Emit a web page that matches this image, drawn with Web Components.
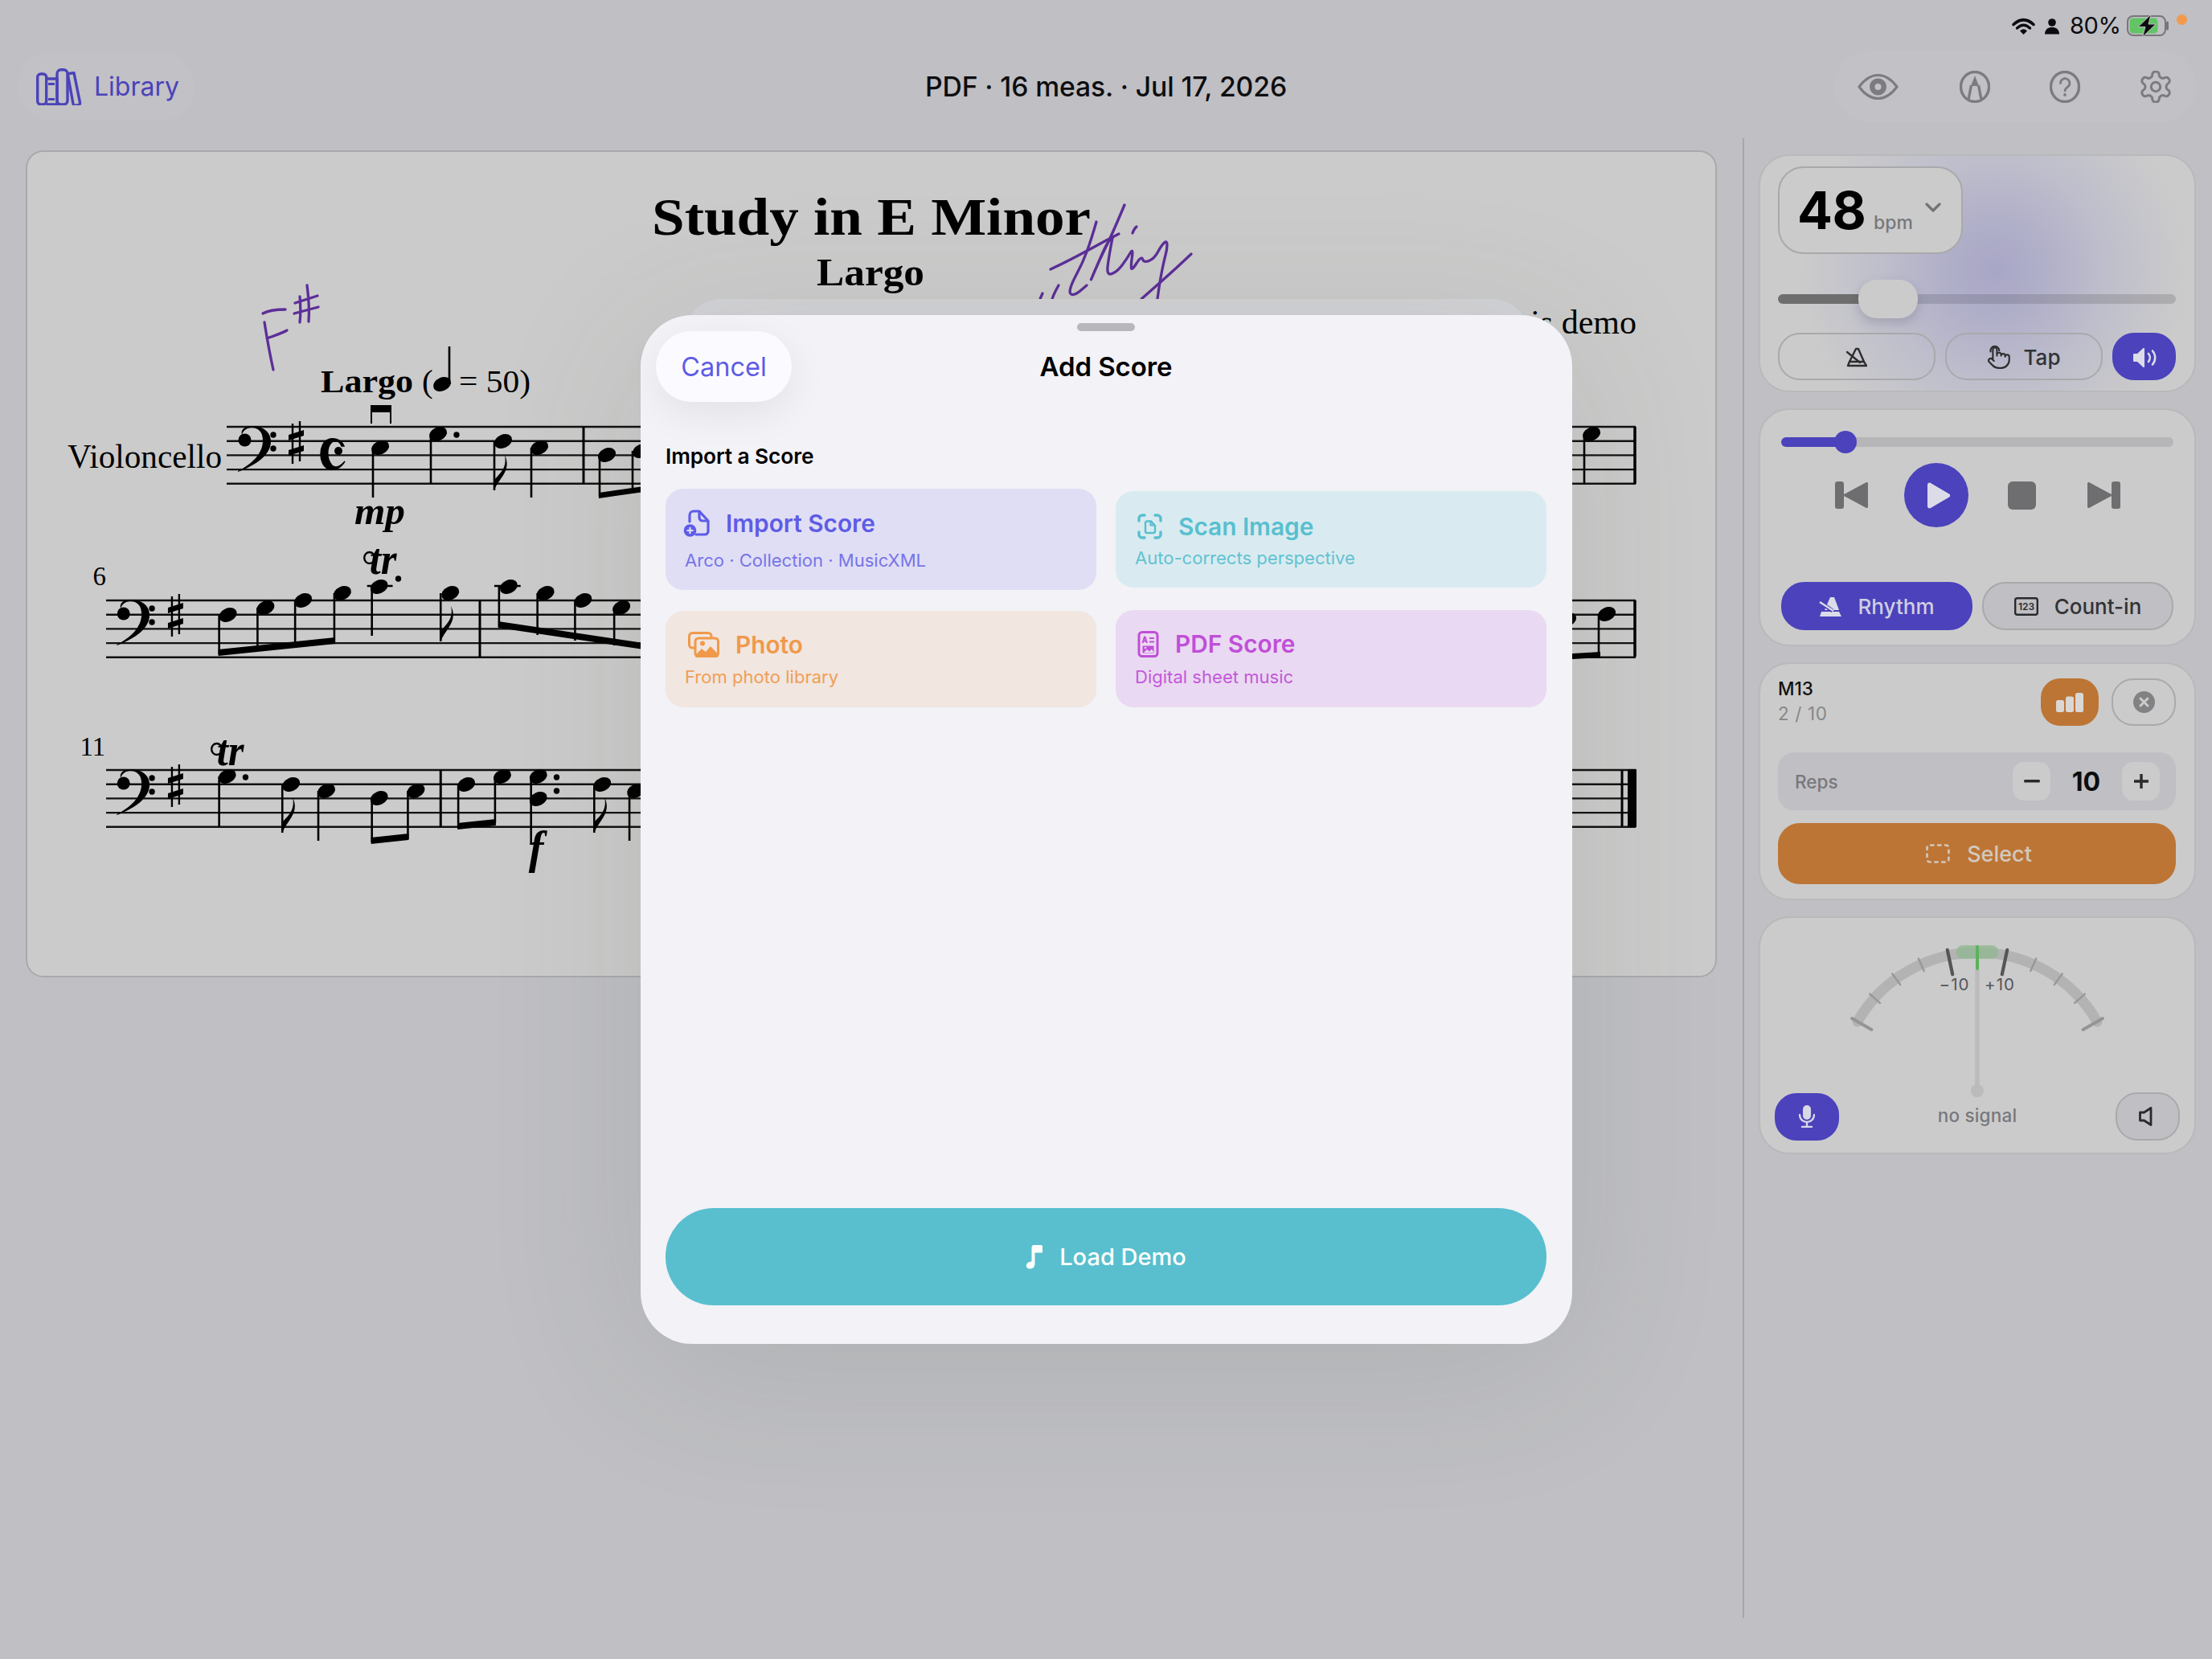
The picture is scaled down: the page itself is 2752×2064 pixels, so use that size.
<!DOCTYPE html>
<html lang="en"><head><meta charset="utf-8"><title>Add Score</title>
<style>
html,body{margin:0;padding:0;width:2752px;height:2064px;overflow:hidden;background:#bfbfc4;font-family:Inter,"Liberation Sans",sans-serif}
</style></head><body>
<app-root></app-root>
<script>
const define=(name,html)=>customElements.define(name,class extends HTMLElement{constructor(){super();this.attachShadow({mode:'open'}).innerHTML=html;}});

/* ---------- status bar ---------- */
define('status-bar',`<style>
:host{display:flex;height:63px;box-sizing:border-box;justify-content:flex-end;align-items:flex-start;padding:19px 31px 0 0;color:#0c0c0e;font:400 29px Inter,"Liberation Sans",sans-serif}
svg{display:block;overflow:visible}
.t{line-height:26px;height:26px;margin:0 11px 0 13px;width:60px;white-space:nowrap;letter-spacing:-.4px}
.dot{width:13px;height:13px;border-radius:50%;background:#f29a49;margin:-1px 0 0 8px}
</style>
<svg width="29" height="20" viewBox="2503 23 29 20" style="margin-top:4px"><path d="M2505 30.500Q2517.500 19 2530 30.500" fill="none" stroke="#0c0c0e" stroke-width="3.600" stroke-linecap="round"/><path d="M2509.500 35Q2517.500 27.500 2525.500 35" fill="none" stroke="#0c0c0e" stroke-width="3.400" stroke-linecap="round"/><path d="M2513 38.500Q2517.500 34 2522 38.500L2517.500 43Z" fill="#0c0c0e"/></svg>
<svg width="18" height="20" viewBox="0 0 18 20" style="margin:4px 0 0 12px"><circle cx="9" cy="5" r="4.800" fill="#0c0c0e"/><path d="M0 19.500C0 13.500 4 11 9 11S18 13.500 18 19.500Z" fill="#0c0c0e"/></svg>
<span class="t">80%</span>
<svg width="54" height="26" viewBox="0 0 54 26"><rect x="1" y="1" width="47" height="24" rx="7" fill="none" stroke="#77777a" stroke-width="2"/><rect x="3.500" y="3.500" width="35" height="19" rx="4.500" fill="#62c465"/><path d="M50.500 9v8" stroke="#77777a" stroke-width="3" stroke-linecap="round"/><path d="M30-1 14 14.500h9L19.500 27 36 11h-9Z" fill="#0c0c0e" stroke="#bfbfc4" stroke-width="1"/></svg>
<span class="dot"></span>`);

/* ---------- top bar ---------- */
define('top-bar',`<style>
:host{display:grid;grid-template-columns:1fr auto 1fr;align-items:center;height:89px;padding:0 20px 0 22px}
.lib{justify-self:start;display:flex;align-items:center;gap:13px;height:85px;padding:0 19px 0 23px;border-radius:42px;background:#c1c1c6;color:#4b43b9;font-size:32px}
.title{font-size:33.700px;font-weight:500;color:#0d0d0f;white-space:nowrap;letter-spacing:-.1px;margin-right:2px}
.tools{justify-self:end;display:flex;align-items:center;gap:74px;height:89px;box-sizing:border-box;padding:0 30px 0 29px;border-radius:44px;background:#c1c1c6}
svg{display:block;flex:none}
</style>
<div class="lib"><svg width="53" height="46" viewBox="45 85 59 46" style="width:59px"><g fill="none" stroke="#4b43b9" stroke-width="3.400" stroke-linejoin="round"><rect x="46.700" y="92" width="11" height="38" rx="4"/><path d="M57.700 98H71V130H57.700"/><rect x="71" y="86.700" width="13" height="43.300" rx="5"/><path d="M86 91.500l6-.9 7.500 37a2.500 2.500 0 0 1-2 3l-3.500.6a2.500 2.500 0 0 1-3-2L84.500 93.500z"/></g><path d="M60 104.500h8M60 123.500h8" stroke="#4b43b9" stroke-width="3"/></svg><span>Library</span></div>
<div class="title">PDF · 16 meas. · Jul 17, 2026</div>
<div class="tools">
<svg width="51" height="32" viewBox="0 0 51 32" style="margin-right:2px"><path d="M2 16C10 5 18 1.500 25.500 1.500S41 5 49 16C41 27 33 30.500 25.500 30.500S10 27 2 16Z" fill="none" stroke="#7b7b80" stroke-width="3"/><circle cx="25.500" cy="16" r="10.500" fill="#7b7b80"/><circle cx="25.500" cy="16" r="4" fill="#c2c2c7"/></svg>
<svg width="38" height="40" viewBox="0 0 38 40"><ellipse cx="19" cy="20" rx="17.500" ry="18.500" fill="none" stroke="#7b7b80" stroke-width="3.400"/><path d="M19 6 14 19h10Z" fill="#7b7b80"/><path d="M14.500 18 11 36M23.500 18 27 36" stroke="#7b7b80" stroke-width="3.400" fill="none"/></svg>
<svg width="38" height="40" viewBox="0 0 38 40"><ellipse cx="19" cy="20" rx="17.500" ry="18.500" fill="none" stroke="#7b7b80" stroke-width="3.400"/><path d="M13.500 15.500a5.700 5.700 0 1 1 9 4.600c-2 1.500-3.400 2.500-3.400 5" fill="none" stroke="#7b7b80" stroke-width="2.800" stroke-linecap="round"/><circle cx="19" cy="30" r="1.900" fill="#7b7b80"/></svg>
<svg width="40" height="40" viewBox="1.500 1.500 21 21"><path d="M12.220 2h-.44a2 2 0 0 0-2 2v.18a2 2 0 0 1-1 1.730l-.43.250a2 2 0 0 1-2 0l-.15-.08a2 2 0 0 0-2.730.73l-.22.380a2 2 0 0 0 .73 2.730l.15.100a2 2 0 0 1 1 1.720v.510a2 2 0 0 1-1 1.740l-.15.090a2 2 0 0 0-.73 2.730l.22.380a2 2 0 0 0 2.730.73l.15-.08a2 2 0 0 1 2 0l.43.250a2 2 0 0 1 1 1.730V20a2 2 0 0 0 2 2h.44a2 2 0 0 0 2-2v-.18a2 2 0 0 1 1-1.730l.43-.25a2 2 0 0 1 2 0l.15.08a2 2 0 0 0 2.730-.73l.22-.39a2 2 0 0 0-.73-2.730l-.15-.08a2 2 0 0 1-1-1.740v-.5a2 2 0 0 1 1-1.740l.15-.09a2 2 0 0 0 .73-2.730l-.22-.38a2 2 0 0 0-2.730-.73l-.15.08a2 2 0 0 1-2 0l-.43-.25a2 2 0 0 1-1-1.730V4a2 2 0 0 0-2-2z" fill="none" stroke="#7b7b80" stroke-width="1.600"/><circle cx="12" cy="12" r="3" fill="none" stroke="#7b7b80" stroke-width="1.600"/></svg>
</div>`);

/* ---------- score page ---------- */
const head=(x,y)=>`<ellipse cx="${x}" cy="${y}" rx="11.500" ry="8.300" transform="rotate(-24 ${x} ${y})"/>`;
const stem=(x,y1,y2)=>`<path d="M${x} ${y1}V${y2}" stroke="#000" stroke-width="2.600"/>`;
const note=(x,y,sx,ey)=>head(x,y)+stem(sx,y,ey);
const flag=(x,e)=>`<path d="M${x} ${e}C${x+6} ${e-16} ${x+22} ${e-24} ${x+13} ${e-44}C${x+16} ${e-28} ${x+8} ${e-22} ${x-1} ${e-12}Z"/>`;
const beam=(x1,y1,x2,y2,t=7)=>`<path d="M${x1-1} ${y1-t}L${x2+1} ${y2-t}V${y2}L${x1-1} ${y1}Z"/>`;
const dot=(x,y)=>`<circle cx="${x}" cy="${y}" r="3.700"/>`;
const staff=(t,x1,x2)=>[0,1,2,3,4].map(i=>`<path d="M${x1} ${t+i*17.700}H${x2}" stroke="#111" stroke-width="2.400"/>`).join('');
const bar=(x,t)=>`<path d="M${x} ${t}v71" stroke="#000" stroke-width="3"/>`;
const clef=(x,t)=>`<g transform="translate(${x} ${t})"><path d="M0 55C18 46 31 33 31 17C31 6 25 1 17 1C11 1 6 5 5 10C3 5 7-1 17-1C32-1 41 7 41 18C41 35 22 48 0 56Z"/><circle cx="8.500" cy="16.500" r="8"/>${dot(44,10)}${dot(44,27)}</g>`;
const sharp=(x,t)=>`<g transform="translate(${x} ${t-8})"><path d="M5 3V53M14 0V50" stroke="#000" stroke-width="2.400"/><path d="M0 17 19 11V18L0 24ZM0 36 19 30V37L0 43Z"/></g>`;
const trill=(x,y,s=54)=>`<text x="${x+8}" y="${y}" font-family="Liberation Serif" font-weight="700" font-style="italic" font-size="${s}" textLength="34" lengthAdjust="spacingAndGlyphs">tr</text><ellipse cx="${x+8}" cy="${y-20}" rx="6.500" ry="7" fill="none" stroke="#000" stroke-width="2.400"/>`;
const serif=`font-family="Liberation Serif"`;
const ink=(pts)=>{let d=`M${pts[0][0]} ${pts[0][1]}`;for(let i=1;i<pts.length-1;i++){const m=[(pts[i][0]+pts[i+1][0])/2,(pts[i][1]+pts[i+1][1])/2];d+=`Q${pts[i][0]} ${pts[i][1]} ${m[0]} ${m[1]}`;}const l=pts[pts.length-1];d+=`L${l[0]} ${l[1]}`;return `<path d="${d}"/>`;};
const music=`
${staff(531,282,2035)}${staff(747,132,2035)}${staff(958,132,2035)}
<path d="M2034 531v71M2034 747v70" stroke="#000" stroke-width="3.500"/>
<path d="M2018 958v70" stroke="#000" stroke-width="3"/><rect x="2025" y="957" width="11" height="72"/>
${clef(296,531)}
${sharp(359,532)}
<path d="M428 555C424 546 414 544 408 547C396 552 396 578 408 583C415 586 424 583 429 574C423 581 417 583 413 579C406 571 406 556 413 550C417 546 423 549 425 555Z" stroke="#000" stroke-width="1.500"/><circle cx="421" cy="561" r="5"/>
<g>
<rect x="461" y="504" width="26" height="9"/><path d="M462 504v23M486 504v23" stroke="#000" stroke-width="2"/>
${note(473,557,464,619)}${note(545,540,536,602)}${dot(568,541)}${note(626,549,615,610)}${flag(615,610)}${note(671,557,661,619)}
${bar(726,531)}
${note(755,566,746,618)}${note(798,561,787,613)}${beam(746,620,800,612)}
${note(1980,540,1971,602)}
${note(1950,771,1941,818)}${note(1999,764,1989,817)}${beam(1941,821,1990,818,7)}
</g>
<g transform="scale(.995 1)">
${clef(146,747)}${clef(146,958)}${sharp(210,747)}${sharp(210,959)}
${note(285,765,274,814)}${note(332,756,322,808)}${note(379,747,369,805)}${note(428,738,418,801)}${beam(274,816,418,801,8)}
${note(474,730,465,791)}<path d="M459 729H491" stroke="#000" stroke-width="2.400"/>${dot(498,720)}
${note(563,738,551,798)}${flag(551,798)}
${bar(600,747)}
${note(636,730,624,780)}<path d="M618 729H651" stroke="#000" stroke-width="2.400"/>${note(682,738,672,790)}${note(729,747,719,797)}${note(777,756,768,803)}${beam(624,781,804,808,8)}
${note(284,966,274,1028)}${dot(307,967)}
${note(364,976,353,1036)}${flag(353,1036)}
${note(408,984,398,1046)}
${note(474,993,465,1048)}${note(520,984,510,1044)}${beam(465,1050,510,1045,8)}
${bar(551,958)}
${note(583,976,573,1029)}${note(628,966,619,1024)}${beam(573,1032,619,1027,8)}
${note(673,966,664,1051)}${head(673,994)}${dot(696,967)}${dot(696,984)}
${note(753,976,743,1036)}${flag(743,1036)}
${note(795,984,787,1046)}
<text x="116" y="728" ${serif} font-size="33">6</text>
<text x="100" y="940" ${serif} font-size="33">11</text>
${trill(454,714)}${trill(263,952)}
<text x="661" y="1074" ${serif} font-weight="700" font-style="italic" font-size="56">f</text>
</g>
<text x="811" y="292" ${serif} font-weight="700" font-size="65" textLength="546" lengthAdjust="spacingAndGlyphs">Study in E Minor</text>
<text x="1016" y="355" ${serif} font-weight="700" font-size="48" textLength="134" lengthAdjust="spacingAndGlyphs">Largo</text>
<text x="2036" y="415" text-anchor="end" ${serif} font-size="42">is demo</text>
<text x="84" y="582" ${serif} font-size="43" textLength="192" lengthAdjust="spacingAndGlyphs">Violoncello</text>
<text x="399" y="488" ${serif} font-weight="700" font-size="41" textLength="115" lengthAdjust="spacingAndGlyphs">Largo</text>
<text x="525" y="488" ${serif} font-size="41">(</text>${head(550,478)}${stem(559,478,431)}
<text x="571" y="488" ${serif} font-size="41" textLength="89" lengthAdjust="spacingAndGlyphs">= 50)</text>
<text x="441" y="652" ${serif} font-weight="700" font-style="italic" font-size="48" textLength="63" lengthAdjust="spacingAndGlyphs">mp</text>
<g fill="none" stroke="#5c2e98" stroke-width="3.300" stroke-linecap="round" stroke-linejoin="round">
<path d="M327 390C334 386 344 385 355 385M329 401C332 420 336 442 340 460M332 421C340 418 350 415 357 411"/>
<path d="M373 369C374 380 374 392 373 401M382 355C384 370 385 386 384 400M366 390 396 382M367 377 395 368"/>
${ink([[1307,335],[1320,329],[1347,315],[1380,297],[1392,291]])}
${ink([[1364,276],[1358,297],[1347,327],[1333,353],[1330,366],[1338,367],[1352,355]])}
${ink([[1399,255],[1383,293],[1368,323],[1354,356],[1368,323],[1378,301],[1384,296]])}
${ink([[1384,296],[1379,322],[1377,343],[1390,338],[1402,322],[1410,308],[1407,330],[1408,337],[1420,318],[1423,327],[1436,322],[1445,305],[1452,299],[1452,310],[1448,325],[1443,350],[1440,372]])}
${ink([[1409,290],[1411,285],[1414,282]])}
${ink([[1420,372],[1445,350],[1465,332],[1482,316]])}
${ink([[1317,355],[1312,364],[1309,372]])}
${ink([[1297,365],[1294,372]])}
</g>`;
define('score-page',`<style>
:host{display:block;position:relative;width:2104px;height:1029px;box-sizing:border-box;background:#cbcbcb;border:2px solid #a9a9ad;border-radius:22px;overflow:hidden}
svg{position:absolute;left:-2px;top:-2px;width:2104px;height:1029px;display:block}
</style><svg viewBox="32 187 2104 1029" fill="#000">${music}</svg>`);

/* ---------- shared side panel card ---------- */
define('side-card',`<style>
:host{display:block;position:relative;box-sizing:border-box;width:544px;height:296px;background:#cbcbcb;border:2px solid #b9b9bb;border-radius:38px;overflow:hidden}
</style><slot></slot>`);

const btnCss=`.btn{display:flex;align-items:center;justify-content:center;box-sizing:border-box;border:2px solid #a9a9ac;border-radius:27px;color:#323234;font-size:26px;font-weight:500;white-space:nowrap}
.fill{background:#4b42bc;border-color:#4b42bc;color:#cfcfe2}
svg{display:block;flex:none}`;

define('tempo-card',`<style>
:host{display:block;height:100%;box-sizing:border-box;padding:13px 23px 0 22px;background:radial-gradient(circle 240px at 291px 143px,#a8a6c6 0,#b2b1c9 30%,#bfbfcc 60%,rgba(203,203,203,0) 100%)}
${btnCss}
.bpm{width:230px;height:109px;box-sizing:border-box;border:2px solid #a9a9ac;border-radius:32px;background:#cbcbcb;display:flex;align-items:baseline;padding:0 0 0 22px;line-height:105px}
.n{font-size:65px;font-weight:700;color:#000;letter-spacing:-.5px;width:95px}
.u{font-size:23px;font-weight:500;color:#78787c}
.bpm svg{align-self:center;margin:-8px 0 0 15px}
.sl{position:relative;height:48px;margin-top:32px;display:flex;align-items:center}
.tr{flex:1;height:12px;border-radius:6px;background:linear-gradient(90deg,#6e6e6e 0 101px,rgba(110,110,130,.35) 0 60%,rgba(150,150,150,.55) 100%)}
.th{position:absolute;left:100px;top:0;width:74px;height:48px;border-radius:23px;background:#cbcbcb;box-shadow:0 6px 14px rgba(60,60,90,.22)}
.row{display:grid;grid-template-columns:196px 196px 79px;gap:12px;margin-top:18px}
.row .btn{height:59px;gap:17px;padding-top:2px}
</style>
<div class="bpm"><span class="n">48</span><span class="u">bpm</span><svg width="20" height="12" viewBox="0 0 20 12"><path d="M2 2 10 10 18 2" fill="none" stroke="#737377" stroke-width="3.200" stroke-linecap="round" stroke-linejoin="round"/></svg></div>
<div class="sl"><div class="tr"></div><div class="th"></div></div>
<div class="row">
<div class="btn"><svg width="26" height="25" viewBox="0 0 26 25"><g fill="none" stroke="#2e2e30" stroke-width="2.400" stroke-linejoin="round" stroke-linecap="round"><path d="M2 23 4 18H22L25 23Z"/><path d="M4 18 12 2h3L22 18"/><path d="M1 6 17 19"/></g></svg></div>
<div class="btn"><svg width="28" height="31" viewBox="1 0 22 23"><g fill="none" stroke="#2e2e30" stroke-width="1.700" stroke-linecap="round" stroke-linejoin="round"><path d="M18 11v-1a2 2 0 0 0-2-2 2 2 0 0 0-2 2M14 10V9a2 2 0 0 0-2-2 2 2 0 0 0-2 2v1M10 9.500V4a2 2 0 0 0-2-2 2 2 0 0 0-2 2v10M18 11a2 2 0 1 1 4 0v3a8 8 0 0 1-8 8h-2c-2.800 0-4.500-.86-5.990-2.340l-3.600-3.600a2 2 0 0 1 2.830-2.820L7 15"/><path d="M3.800 6A4.300 4.300 0 0 1 8 .7 4.300 4.300 0 0 1 12.200 5"/></g></svg><span>Tap</span></div>
<div class="btn fill"><svg width="30" height="24" viewBox="0 0 30 24"><path d="M1 8a1 1 0 0 1 1-1h4l7-6.500a1 1 0 0 1 2 .8v21.400a1 1 0 0 1-2 .8L6 17H2a1 1 0 0 1-1-1Z" fill="#dcdce8"/><path d="M20 7a8 8 0 0 1 0 10M25 3.500a13 13 0 0 1 0 17" fill="none" stroke="#dcdce8" stroke-width="2.600" stroke-linecap="round"/></svg></div>
</div>`);

define('transport-card',`<style>
:host{display:block;height:100%;box-sizing:border-box;padding:26px 26px 0 26px}
${btnCss}
.sk{position:relative;height:28px;display:flex;align-items:center}
.sk i{flex:1;height:12px;border-radius:6px;background:linear-gradient(90deg,#4b42bc 0 80px,#b6b6b8 0)}
.sk b{position:absolute;left:66px;top:0;width:28px;height:28px;border-radius:50%;background:#4b42bc}
.ctl{display:grid;grid-template-columns:repeat(3,106px) 99px;justify-items:center;align-items:center;height:80px;margin-top:12px;padding-left:34px}
.play{width:80px;height:80px;border-radius:50%;background:#4b42bc;display:flex;align-items:center;justify-content:center}
.play svg{margin-left:6px}
.row{display:grid;grid-template-columns:238px 238px;gap:12px;margin-top:68px}
.row .btn{height:60px;gap:20px;border-radius:29px}
.g{background:#bfbfc4}
</style>
<div class="sk"><i></i><b></b></div>
<div class="ctl">
<svg width="41" height="34" viewBox="0 0 41 34"><rect width="11" height="34" rx="3" fill="#6e6e70"/><path d="M39 1 13 15a2 2 0 0 0 0 4L39 33a1.500 1.500 0 0 0 2-1.500V2.500A1.500 1.500 0 0 0 39 1Z" fill="#6e6e70"/></svg>
<div class="play"><svg width="30" height="33" viewBox="0 0 30 33"><path d="M1 3.500C1 1 3 0 5 1L28 14.500a2.300 2.300 0 0 1 0 4L5 32c-2 1-4 0-4-2.500Z" fill="#dcdce8"/></svg></div>
<svg width="35" height="35" viewBox="0 0 35 35"><rect width="35" height="35" rx="6" fill="#6e6e70"/></svg>
<svg width="41" height="34" viewBox="0 0 41 34"><rect x="30" width="11" height="34" rx="3" fill="#6e6e70"/><path d="M2 1 28 15a2 2 0 0 1 0 4L2 33a1.500 1.500 0 0 1-2-1.500V2.500A1.500 1.500 0 0 1 2 1Z" fill="#6e6e70"/></svg>
</div>
<div class="row">
<div class="btn fill"><svg width="28" height="25" viewBox="0 0 28 25"><path d="M1 25 3 19H25L28 25Z" fill="#dcdce8"/><path d="M7 17 14 1h5L25 17Z" fill="#dcdce8"/><path d="M1 7 17 18" stroke="#4b42bc" stroke-width="5"/><path d="M1 7 18 18" stroke="#dcdce8" stroke-width="2.400"/></svg><span>Rhythm</span></div>
<div class="btn g"><svg width="30" height="23" viewBox="0 0 30 23"><rect x="1.200" y="1.200" width="27.600" height="20.600" rx="2.500" fill="none" stroke="#2a2a2c" stroke-width="2.400"/><text x="15" y="16" text-anchor="middle" font-family="Inter" font-size="12" font-weight="600" fill="#2a2a2c">123</text></svg><span>Count-in</span></div>
</div>`);

define('loop-card',`<style>
:host{display:block;height:100%;box-sizing:border-box;padding:18px 23px 0 22px}
${btnCss}
.top{display:flex;align-items:center;height:59px}
.lbl{flex:1;font-size:22.500px;line-height:31px;margin-top:-3px}
.lbl b{display:block;font-weight:500;color:#111}
.lbl span{color:#87878a;letter-spacing:.6px}
.or{width:72px;height:59px;background:#bd7535;border-color:#bd7535;border-radius:24px}
.x{width:80px;height:59px;margin-left:16px;border-radius:27px}
.reps{display:flex;align-items:center;height:72px;margin-top:33px;background:#bfbfc4;border-radius:20px;padding:0 20px 0 21px;color:#78787c;font-size:22.500px;font-weight:500}
.reps span:first-child{flex:1}
.st{width:47px;height:48px;border-radius:14px;background:#cbcbcb;display:flex;align-items:center;justify-content:center}
.v{width:89px;text-align:center;color:#0c0c0e;font-size:32px;font-weight:700}
.sel{height:76px;margin-top:16px;background:#bd7535;border-color:#bd7535;border-radius:27px;gap:21px;color:#d2c8be;font-size:27px;padding-left:5px}
</style>
<div class="top"><div class="lbl"><b>M13</b><span>2 / 10</span></div>
<div class="btn or"><svg width="34" height="24" viewBox="0 0 34 24"><rect y="9" width="10" height="15" rx="2.500" fill="#dad7d4"/><rect x="12" y="4.500" width="10" height="19.500" rx="2.500" fill="#dad7d4"/><rect x="24" width="10" height="24" rx="2.500" fill="#dad7d4"/></svg></div>
<div class="btn x"><svg width="27" height="27" viewBox="0 0 27 27"><circle cx="13.500" cy="13.500" r="13.500" fill="#828284"/><path d="M9 9 18 18M18 9 9 18" stroke="#cbcbcb" stroke-width="3" stroke-linecap="round"/></svg></div></div>
<div class="reps"><span>Reps</span><div class="st"><svg width="20" height="4" viewBox="0 0 20 4"><rect width="20" height="3.600" rx="1.500" fill="#2a2a2c"/></svg></div><span class="v">10</span><div class="st"><svg width="20" height="20" viewBox="0 0 20 20"><path d="M10 1V19M1 10H19" stroke="#2a2a2c" stroke-width="3.400"/></svg></div></div>
<div class="btn sel"><svg width="30" height="24" viewBox="0 0 30 24"><rect x="1.500" y="1.500" width="27" height="21" rx="3.500" fill="none" stroke="#d2c8be" stroke-width="2.600" stroke-dasharray="5.500 3.500"/></svg><span>Select</span></div>`);

const pol=(a,r)=>{const t=a*Math.PI/180;return [(2460+r*Math.sin(t)).toFixed(1),(1357-r*Math.cos(t)).toFixed(1)];};
const tick=(a,r1,r2,c,w)=>{const p=pol(a,r1),q=pol(a,r2);return `<path d="M${p[0]} ${p[1]}L${q[0]} ${q[1]}" stroke="${c}" stroke-width="${w}" stroke-linecap="round"/>`;};
let ticks='';[24,36,48].forEach(a=>{ticks+=tick(a,163,180,'#979799',2.4)+tick(-a,163,180,'#979799',2.4);});
ticks+=tick(12,148,179,'#555557',4.2)+tick(-12,148,179,'#555557',4.2)+tick(60,152,180,'#959597',4)+tick(-60,152,180,'#959597',4);
const arcA=pol(-60,172),arcB=pol(60,172);
define('tuner-card',`<style>
:host{display:flex;flex-direction:column;justify-content:flex-end;height:100%;box-sizing:border-box;padding:0 18px 15px 18px;position:relative}
${btnCss}
.dial{position:absolute;left:-2px;top:-2px;width:544px;height:296px}
.row{display:flex;align-items:center;justify-content:space-between;position:relative}
.m{width:80px;height:59px}
.g{background:#bfbfc4;height:60px}
.s{font-size:22.500px;font-weight:500;color:#78787c;margin-top:-4px;letter-spacing:.2px}
</style>
<svg class="dial" viewBox="2188 1140 544 296">
<path d="M${arcA[0]} ${arcA[1]}A172 172 0 0 1 ${arcB[0]} ${arcB[1]}" fill="none" stroke="#b3b3b3" stroke-width="13" stroke-linecap="round"/>
${ticks}
<path d="M2460 1357V1206" stroke="#bbbbbb" stroke-width="5.500"/><circle cx="2460" cy="1357" r="8" fill="#bbbbbb"/>
<rect x="2434" y="1176" width="52" height="17" rx="8" fill="#8fb78f" fill-opacity=".75"/>
<path d="M2460 1178V1205" stroke="#5cb25c" stroke-width="4" stroke-linecap="round"/>
<text x="2431.500" y="1232" text-anchor="middle" font-family="Inter" font-size="20.500" letter-spacing="1" fill="#55555a">−10</text>
<text x="2488" y="1232" text-anchor="middle" font-family="Inter" font-size="20.500" letter-spacing="1" fill="#55555a">+10</text>
</svg>
<div class="row">
<div class="btn fill m"><svg width="20" height="28" viewBox="0 0 20 28"><rect x="5" y="0" width="10" height="18" rx="5" fill="#d8d8e6"/><path d="M1 12a9 9 0 0 0 18 0M10 21v5M4 27h12" fill="none" stroke="#d8d8e6" stroke-width="2.400" stroke-linecap="round"/></svg></div>
<span class="s">no signal</span>
<div class="btn g m"><svg width="17" height="24" viewBox="0 0 17 24" style="margin-left:-5px"><path d="M15 1.500 6.500 7H1.500V17H6.500L15 22.500Z" fill="none" stroke="#2a2a2c" stroke-width="2.800" stroke-linejoin="round"/></svg></div>
</div>`);

define('side-panel',`<style>
:host{display:flex;flex-direction:column;gap:20px;box-sizing:border-box;width:584px;height:1841px;border-left:2px solid #a6a6aa;padding:20px 0 0 18px}
</style>
<side-card><tempo-card></tempo-card></side-card>
<side-card><transport-card></transport-card></side-card>
<side-card><loop-card></loop-card></side-card>
<side-card><tuner-card></tuner-card></side-card>`);

/* ---------- add score sheet ---------- */
define('import-card',`<style>
:host{display:block;box-sizing:border-box;padding:var(--pt) 0 0 24px;background:var(--bg);border-radius:22px;color:var(--c);height:var(--h)}
.r{display:flex;align-items:center;gap:20px;height:var(--rh);margin-left:var(--il);font-size:29.800px;font-weight:600;white-space:nowrap}
.s{margin-top:var(--g);height:28px;line-height:28px;font-size:22.050px;white-space:nowrap;color:var(--s,var(--c));opacity:.92}
::slotted(svg){display:block;flex:none}
</style><div class="r"><slot name="icon"></slot><slot name="title"></slot></div><div class="s"><slot name="sub"></slot></div>`);

define('add-score-sheet',`<style>
:host{position:absolute;left:797px;top:392px;width:1159px;height:1280px;z-index:5}
.back{position:absolute;left:52px;top:-20px;width:1056px;height:200px;border-radius:50px;background:#d3d3d7}
.sheet{position:relative;box-sizing:border-box;width:100%;height:100%;background:#f2f2f7;border-radius:64px;padding:20px 32px 48px 31px;display:flex;flex-direction:column;box-shadow:0 30px 200px rgba(60,70,50,.12)}
.h{position:absolute;left:543px;top:10px;width:72px;height:10px;border-radius:5px;background:#b7b7bc}
.head{position:relative;display:flex;justify-content:center;align-items:center;height:88px}
.cancel{position:absolute;left:-12px;top:0;width:169px;height:88px;border-radius:44px;background:#fbfbff;color:#5e5ce6;font-size:32.500px;display:flex;align-items:center;justify-content:center;box-shadow:0 14px 50px rgba(0,0,0,.07)}
.ttl{font-size:33px;font-weight:600;color:#000;white-space:nowrap;letter-spacing:-.1px}
.lbl{margin-top:53px;height:30px;line-height:30px;font-size:26.300px;font-weight:600;color:#000;letter-spacing:-.1px}
.grid{display:grid;grid-template-columns:536px 536px;gap:25px 24px;align-items:center;margin-top:25px}
.demo{margin-top:auto;height:121px;border-radius:60px;background:#59bfce;color:#fff;display:flex;align-items:center;justify-content:center;gap:21px;font-size:29px;font-weight:500}
.demo svg{display:block}
</style>
<div class="back"></div>
<div class="sheet">
<div class="h"></div>
<div class="head"><div class="cancel">Cancel</div><div class="ttl">Add Score</div></div>
<div class="lbl">Import a Score</div>
<div class="grid">
<import-card style="--bg:#e0def5;--c:#5e5ce6;--s:#6f6de6;--h:126px;--pt:25px;--rh:36px;--g:14px;--il:-2px">
<svg slot="icon" width="33" height="36" viewBox="849 635 33 36"><path d="M857 651V643a5 5 0 0 1 5-5h7l11 12v13a4 4 0 0 1-4 4h-11" fill="none" stroke="#5e5ce6" stroke-width="3.200" stroke-linecap="round" stroke-linejoin="round"/><path d="M869 638v8a4 4 0 0 0 4 4h7" fill="none" stroke="#5e5ce6" stroke-width="3.200"/><circle cx="857.500" cy="662" r="7.800" fill="#5e5ce6"/><path d="M857.500 658v8M853.500 662h8" stroke="#e0def5" stroke-width="2.200"/></svg>
<span slot="title">Import Score</span><span slot="sub">Arco · Collection · MusicXML</span></import-card>
<import-card style="--bg:#d9ebf0;--c:#58bfd0;--h:120px;--pt:28px;--rh:32px;--g:9px;--il:3px">
<svg slot="icon" width="31" height="32" viewBox="1415 637 31 32"><path d="M1417 646v-3a4 4 0 0 1 4-4h3M1437 639h3a4 4 0 0 1 4 4v3M1444 660v3a4 4 0 0 1-4 4h-3M1424 667h-3a4 4 0 0 1-4-4v-3" fill="none" stroke="#58bfd0" stroke-width="3.400" stroke-linecap="round"/><path d="M1425 649a2.500 2.500 0 0 1 2.500-2.500h4.500l5 5.500v7a2 2 0 0 1-2 2h-8a2 2 0 0 1-2-2Z" fill="none" stroke="#58bfd0" stroke-width="2.400"/><path d="M1431.500 646.500v5h5.500" fill="none" stroke="#58bfd0" stroke-width="2.200"/></svg>
<span slot="title">Scan Image</span><span slot="sub">Auto-corrects perspective</span></import-card>
<import-card style="--bg:#f1e6e0;--c:#f0994a;--h:120px;--pt:26px;--rh:32px;--g:10px;--il:4px">
<svg slot="icon" width="39" height="32" viewBox="856 786 39 32"><path d="M864 806h-2.500a4 4 0 0 1-4-4V791.500a4 4 0 0 1 4-4H881a4 4 0 0 1 4 4V793" fill="none" stroke="#f0994a" stroke-width="3"/><rect x="865" y="794" width="28.500" height="22.500" rx="4" fill="none" stroke="#f0994a" stroke-width="3"/><circle cx="874" cy="800.500" r="3" fill="#f0994a"/><path d="M865 815l8-8 5 4 6-7 9.500 10v2a2 2 0 0 1-2 2H867a2 2 0 0 1-2-2Z" fill="#f0994a"/></svg>
<span slot="title">Photo</span><span slot="sub">From photo library</span></import-card>
<import-card style="--bg:#ead9f2;--c:#bf4fd8;--h:121px;--pt:26px;--rh:32px;--g:11px;--il:3px">
<svg slot="icon" width="27" height="33" viewBox="1415 785 27 33"><rect x="1417" y="786.500" width="23" height="30" rx="4" fill="none" stroke="#bf4fd8" stroke-width="3"/><path d="M1421.500 800l2.500-7.500h.5l2.500 7.500M1422.500 797.500h3.500M1430 794h6M1430 798.500h6" fill="none" stroke="#bf4fd8" stroke-width="2"/><path d="M1421.500 803.500h14v9h-14Z" fill="#bf4fd8"/><path d="M1423 812l4-4 3 2.500 3-3 2.500 4.500Z" fill="#ead9f2"/><circle cx="1425" cy="806" r="1.300" fill="#ead9f2"/></svg>
<span slot="title">PDF Score</span><span slot="sub">Digital sheet music</span></import-card>
</div>
<div class="demo"><svg width="21" height="31" viewBox="0 0 21 31"><path d="M7.500 3.500 9 1H19.500A1.500 1.500 0 0 1 21 2.500V9c0 1-.5 1.500-1.500 1.500H11.500V24c0 3.500-2 6.500-5.500 6.500S0 28.500 1 25.500 5 21.500 7.500 21.500Z" fill="#fff"/></svg><span>Load Demo</span></div>
</div>`);

/* ---------- page ---------- */
define('app-root',`<style>
:host{display:block;position:relative;width:2752px;height:2064px;overflow:hidden;background:#bfbfc4}
main{display:flex;margin-top:20px;height:1841px}
.score{width:2168px;box-sizing:border-box;padding:15px 0 0 32px}
</style>
<status-bar></status-bar>
<top-bar></top-bar>
<main><div class="score"><score-page></score-page></div><side-panel></side-panel></main>
<add-score-sheet></add-score-sheet>`);
</script>
</body></html>
